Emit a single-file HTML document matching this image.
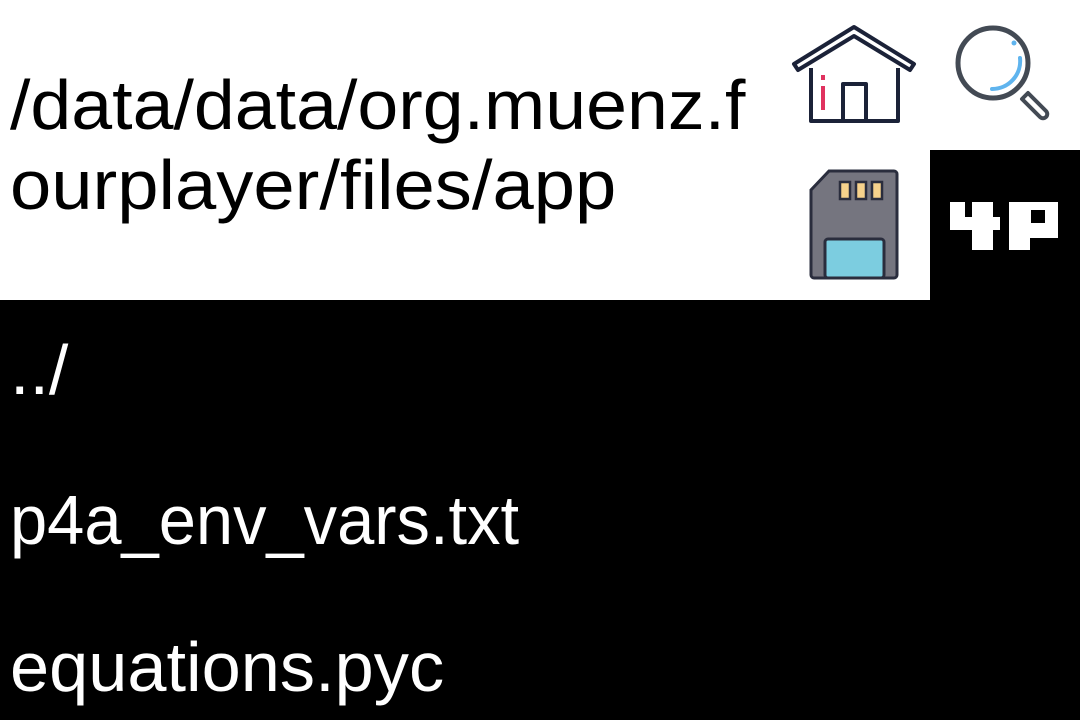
<!DOCTYPE html>
<html><head><meta charset="utf-8"><style>
html,body{margin:0;padding:0;width:1080px;height:720px;background:#000;overflow:hidden;font-family:"Liberation Sans",sans-serif}
.t{position:absolute;left:10px;font-size:70px;line-height:1;white-space:nowrap;transform-origin:0 0}
</style></head><body>
<div style="position:absolute;left:0;top:0;width:1080px;height:150px;background:#fff"></div>
<div style="position:absolute;left:0;top:150px;width:930px;height:150px;background:#fff"></div>
<div class="t" style="top:70px;color:#000;transform:scaleX(1.05)">/data/data/org.muenz.f</div>
<div class="t" style="top:150px;color:#000;transform:scaleX(1.06)">ourplayer/files/app</div>
<div class="t" style="top:335px;color:#fff">../</div>
<div class="t" style="top:485px;color:#fff;transform:scaleX(0.955)">p4a_env_vars.txt</div>
<div class="t" style="top:632px;color:#fff;transform:scaleX(1.005)">equations.pyc</div>
<svg width="1080" height="720" style="position:absolute;left:0;top:0">
 <g fill="none" stroke="#1b2238" stroke-width="4" stroke-linejoin="round">
  <path d="M854 27 L794 64 L798 70 L854 36 L910 70 L914 64 Z"/>
  <path d="M811 68 V121 H898 V68"/>
  <path d="M843 121 V84 H866 V121"/>
 </g>
 <line x1="823" y1="86" x2="823" y2="110" stroke="#e0325f" stroke-width="4"/>
 <line x1="823" y1="75" x2="823" y2="80" stroke="#e0325f" stroke-width="4"/>
 <circle cx="993" cy="63" r="35" fill="none" stroke="#434a54" stroke-width="5"/>
 <path d="M1020 58 A28 28 0 0 1 992 89" fill="none" stroke="#5fb4ee" stroke-width="4" stroke-linecap="round"/>
 <circle cx="1014" cy="43" r="2.5" fill="#5fb4ee"/>
 <path d="M1028 93 L1046 111 A4 4 0 0 1 1040 117 L1022 99 Z" fill="none" stroke="#434a54" stroke-width="4" stroke-linejoin="round"/>
 <path d="M829 171 H894 A3 3 0 0 1 897 174 V275 A3 3 0 0 1 894 278 H814 A3 3 0 0 1 811 275 V190 Z" fill="#75757f" stroke="#2a2d3d" stroke-width="3"/>
 <rect x="825" y="239" width="59" height="39" rx="3" fill="#7ccde0" stroke="#2a2d3d" stroke-width="3"/>
 <rect x="840" y="182" width="10" height="17" fill="#f6d28c" stroke="#2a2d3d" stroke-width="2.5"/>
 <rect x="856" y="182" width="10" height="17" fill="#f6d28c" stroke="#2a2d3d" stroke-width="2.5"/>
 <rect x="872" y="182" width="10" height="17" fill="#f6d28c" stroke="#2a2d3d" stroke-width="2.5"/>
 <g fill="#fff">
  <rect x="950" y="202" width="15" height="28"/>
  <rect x="950" y="217" width="50" height="13"/>
  <rect x="972" y="202" width="21" height="48"/>
  <path d="M1009 202 H1058 V238 H1030 V250 H1009 Z M1031 210 V223 H1045 V210 Z" fill-rule="evenodd"/>
 </g>
</svg>
</body></html>
